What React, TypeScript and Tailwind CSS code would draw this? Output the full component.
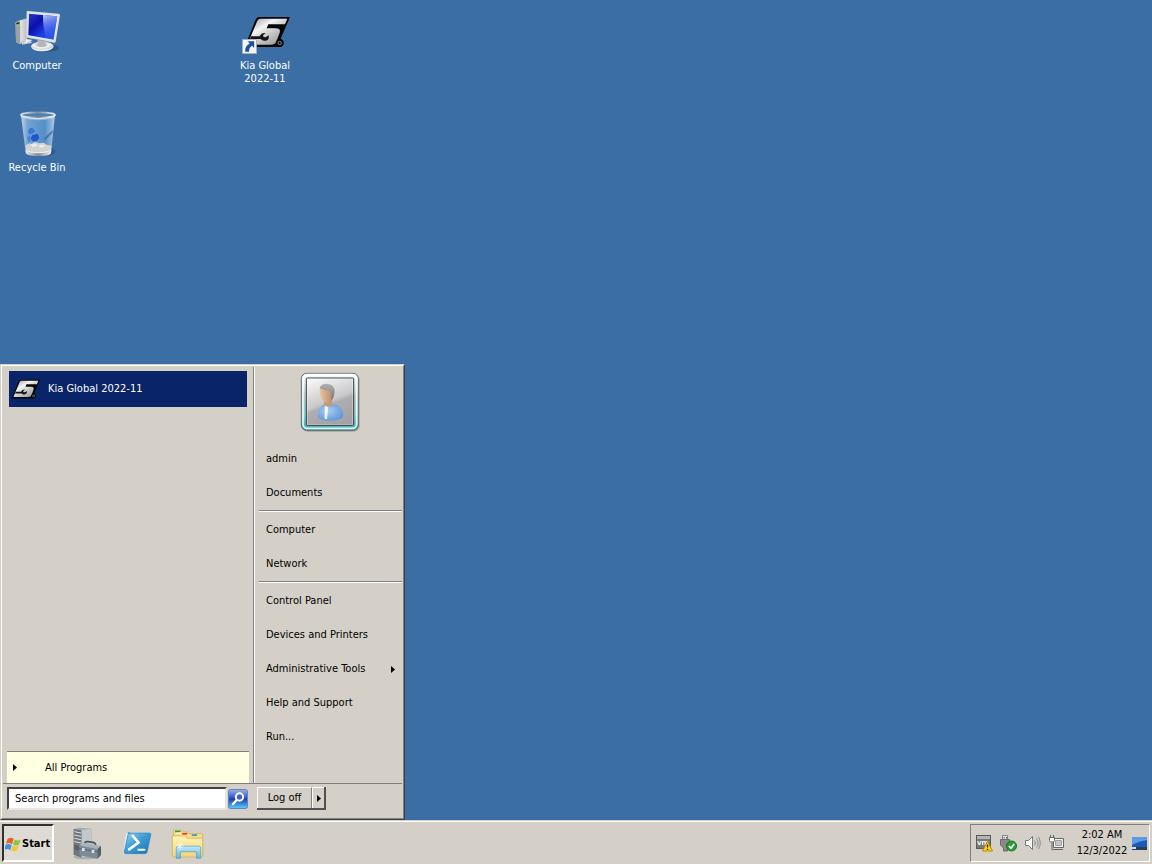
import type { ReactNode } from 'react'

const placeGroups = [
  ['admin', 'Documents'],
  ['Computer', 'Network'],
  ['Control Panel', 'Devices and Printers', 'Administrative Tools', 'Help and Support', 'Run...'],
]

function ComputerIcon() {
  return (
    <svg viewBox="39 24 144 144" className="size-12" aria-hidden="true">
      <defs>
        <linearGradient id="pcScreen" x1="0" y1="0" x2="1" y2="1">
          <stop offset="0" stopColor="#2a35c8" />
          <stop offset=".35" stopColor="#0a10a8" />
          <stop offset=".6" stopColor="#1a3be0" />
          <stop offset="1" stopColor="#2b62f2" />
        </linearGradient>
        <linearGradient id="pcGloss" x1="0" y1="0" x2=".3" y2="1">
          <stop offset="0" stopColor="#c8d8ff" stopOpacity=".95" />
          <stop offset="1" stopColor="#3e6cf4" stopOpacity=".1" />
        </linearGradient>
        <linearGradient id="pcCase" x1="0" y1="0" x2="1" y2="0">
          <stop offset="0" stopColor="#8f9499" />
          <stop offset=".4" stopColor="#e6e7e8" />
          <stop offset="1" stopColor="#b9bcc0" />
        </linearGradient>
        <radialGradient id="pcBase" cx=".45" cy=".3" r=".7">
          <stop offset="0" stopColor="#a7a9ac" />
          <stop offset=".5" stopColor="#f1f1f1" />
          <stop offset="1" stopColor="#b5b7ba" />
        </radialGradient>
      </defs>
      <ellipse cx="142" cy="144" rx="36" ry="11" fill="#1c3f6b" opacity=".45" />
      <path d="M46 67l15-6 20-6v66l-22 11-11-5z" fill="url(#pcCase)" />
      <path d="M46 67l14-4 1 68-13-4z" fill="#9da1a5" />
      <path d="M49 69l9-3v5l-9 2z" fill="#25292d" />
      <path d="M50 76l8-2v4l-8 1z" fill="#6fe02c" />
      <path d="M63 122l27 0 8 6-32 6z" fill="#c9cacc" />
      <path d="M80 117l18 3-26 12z" fill="#eee" />
      <path d="M80 34q1-2 4-1l92 8q5 1 4 5l-13 79q-1 4-5 3l-80-15q-4-1-3-5z" fill="#dcdddf" />
      <path d="M85 39l90 8-12 75-79-14z" fill="#f5f5f5" />
      <path d="M87 41l85 8-11 70-76-13z" fill="url(#pcScreen)" />
      <path d="M129 45l43 4-11 70-22-4q-11-34-10-70z" fill="url(#pcGloss)" />
      <path d="M112 118l28 5-2 15h-28z" fill="#a2a4a7" />
      <ellipse cx="127" cy="139" rx="34" ry="14" fill="url(#pcBase)" />
      <path d="M115 120l22 4q-2 11 3 14-14 6-28 0 5-7 3-18z" fill="#b4b6b9" />
      <path d="M93 141q8 14 36 13 28-1 32-15-8 10-34 10-24 0-34-8z" fill="#fff" opacity=".8" />
    </svg>
  )
}

function KiaMark({ className }: { className: string }) {
  return (
    <svg viewBox="18 14 141 96" className={className} aria-hidden="true">
      <defs>
        <linearGradient id="kiaPlate" x1="0" y1="0" x2="1" y2="1">
          <stop offset="0" stopColor="#8d8d8d" />
          <stop offset=".35" stopColor="#f4f4f4" />
          <stop offset=".6" stopColor="#c4c4c4" />
          <stop offset="1" stopColor="#8a8a8a" />
        </linearGradient>
      </defs>
      <path d="M62 17h94l-23 53-5 13q10 3 9 13-1 11-13 11H20l29-73q5-15 13-17z" fill="#050505" />
      <path d="M67 22h81l-7 17H91l-5 12h28q15 0 11 13l-9 24q-4 12-17 12H28l30-72q3-6 9-6z" fill="url(#kiaPlate)" />
      <path
        d="M39 75h26q4-11 18-10l-8 7 2 5 6 1 9-6q3 15-11 16-8 1-13-5H36z"
        fill="#151515"
      />
      <circle cx="125" cy="95" r="11" fill="#070707" />
      <circle cx="125" cy="95" r="5" fill="none" stroke="#888" strokeWidth="3" />
    </svg>
  )
}

function KiaShortcutIcon() {
  return (
    <span className="relative flex size-12 items-center pl-[3px]">
      <KiaMark className="h-8 w-[47px] shrink-0" />
      <svg viewBox="0 0 16 16" className="absolute bottom-0.5 left-px size-[15px]" aria-hidden="true">
        <path d="M.5.5h15v15H.5z" fill="#f4f6f8" stroke="#a9b0b8" />
        <path d="M6 2.500h7v7l-2.300-2.300C8.500 8.500 7.500 10 7.500 13.500H3.600C3 9.500 5 6.500 8.200 4.800z" fill="#1d4f9c" />
      </svg>
    </span>
  )
}

function RecycleBinIcon() {
  return (
    <svg viewBox="39 42 144 144" className="size-12" aria-hidden="true">
      <defs>
        <linearGradient id="binGlass" x1="0" y1="0" x2="1" y2="0">
          <stop offset="0" stopColor="#d6e6f4" stopOpacity=".85" />
          <stop offset=".2" stopColor="#7fb0dc" stopOpacity=".8" />
          <stop offset=".7" stopColor="#5e9ad2" stopOpacity=".75" />
          <stop offset="1" stopColor="#c8def2" stopOpacity=".85" />
        </linearGradient>
        <linearGradient id="binRim" x1="0" y1="0" x2="1" y2="0">
          <stop offset="0" stopColor="#e8ecef" />
          <stop offset=".5" stopColor="#7f8b95" />
          <stop offset="1" stopColor="#f2f4f6" />
        </linearGradient>
      </defs>
      <ellipse cx="132" cy="166" rx="34" ry="15" fill="#1f4778" opacity=".45" />
      <path d="M63 58l14 112q2 9 38 9t38-9l12-112z" fill="url(#binGlass)" />
      <ellipse cx="114" cy="57" rx="51" ry="8" fill="#4c80b6" />
      <path d="M63 58q50 18 102 0l-1 8q-50 14-100 0z" fill="#a8cbea" opacity=".6" />
      <path d="M132 127l26-25v8l-24 24z" fill="#3b6e9e" opacity=".75" />
      <path d="M86 101q5-8 12-5l7 8-5 8-11 3q-7-6-3-14z" fill="#3a78d6" />
      <path d="M97 117l16-4 5 12-7 11H97l-5-9z" fill="#1f58cb" />
      <path d="M81 124l9-7 3 16-8 5z" fill="#4585da" />
      <path d="M76 149q8-9 19-6l10-5 14 4 12-2 9 6 15 3-2 16q-8 8-38 8-32 0-36-9z" fill="#d3d2d0" />
      <path d="M90 147l14-5 9 7-14 4zM121 146l15 2-8 7-12-2z" fill="#ececea" />
      <path d="M76 163q10 9 39 9 30 0 39-9l-2 10q-6 7-37 7-32 0-37-8z" fill="url(#binRim)" />
      <path d="M78 162q12 8 37 8 27 0 37-8" fill="none" stroke="#fff" strokeWidth="2" />
      <ellipse cx="114" cy="57" rx="51" ry="8" fill="none" stroke="url(#binRim)" strokeWidth="5" />
      <path d="M64 60q50 16 101 0" fill="none" stroke="#e9eef2" strokeWidth="3" />
    </svg>
  )
}

function UserPicture() {
  return (
    <svg viewBox="165 36 180 180" className="size-[60px]" aria-hidden="true">
      <defs>
        <linearGradient id="frame" x1="0" y1="0" x2="0" y2="1">
          <stop offset="0" stopColor="#fff" />
          <stop offset=".4" stopColor="#b9c6c6" />
          <stop offset=".75" stopColor="#7ccdd0" />
          <stop offset="1" stopColor="#3fa6ac" />
        </linearGradient>
        <linearGradient id="photo" x1=".3" y1="0" x2=".7" y2="1">
          <stop offset="0" stopColor="#f4f4f4" />
          <stop offset=".48" stopColor="#c9c9cb" />
          <stop offset=".56" stopColor="#aeadb1" />
          <stop offset="1" stopColor="#a3a1a7" />
        </linearGradient>
        <radialGradient id="shirt" cx=".4" cy=".4" r=".7">
          <stop offset="0" stopColor="#a9cdf3" />
          <stop offset="1" stopColor="#5b93d6" />
        </radialGradient>
        <linearGradient id="skin" x1="0" y1="0" x2="1" y2="0">
          <stop offset="0" stopColor="#e9c49c" />
          <stop offset="1" stopColor="#b5896a" />
        </linearGradient>
        <linearGradient id="hair" x1="0" y1="0" x2="0" y2="1">
          <stop offset="0" stopColor="#b0b0b1" />
          <stop offset="1" stopColor="#7d7775" />
        </linearGradient>
      </defs>
      <rect x="171" y="43" width="173" height="172" rx="18" fill="#000" opacity=".22" />
      <rect x="169" y="40" width="171" height="171" rx="16" fill="url(#frame)" stroke="#596e70" strokeWidth="3" />
      <rect x="174" y="44" width="161" height="161" rx="13" fill="none" stroke="#fff" strokeWidth="5" opacity=".85" />
      <rect x="184" y="54" width="142" height="142" rx="3" fill="url(#photo)" stroke="#3b3f42" strokeWidth="3" />
      <rect x="187" y="57" width="136" height="136" fill="none" stroke="#fff" strokeWidth="2" opacity=".5" />
      <path d="M218 170q0-28 20-37l32 0q24 8 25 36-8 13-38 13-31 0-39-12z" fill="url(#shirt)" />
      <path d="M239 140l5-7 6 5-4 40-7-2z" fill="#f3f6fa" />
      <path d="M236 118l25 2 1 17-14 4-10-5z" fill="#c49a78" />
      <path d="M224 92q0-17 18-17 22 0 24 21 0 30-19 34-20-5-23-38z" fill="url(#skin)" />
      <path d="M224 85q2-14 21-14 25 1 24 25-1 15-7 23l-4-2q3-14-2-24-14 0-32-8z" fill="url(#hair)" />
    </svg>
  )
}

function WindowsFlag() {
  return (
    <svg viewBox="14 286 48 44" className="h-[15px] w-4" aria-hidden="true">
      <path d="M22 291q10-6 18 0l-5 16q-9-6-18-1z" fill="#e8602a" />
      <path d="M43 293q8 6 18 1l-5 15q-10 4-18-1z" fill="#8cc63e" />
      <path d="M16 309q9-5 18 1l-4 15q-9-6-18-1z" fill="#3f93dc" />
      <path d="M37 311q8 6 18 1l-5 14q-9 5-17-1z" fill="#f8c62c" />
    </svg>
  )
}

function ServerManagerIcon() {
  return (
    <svg viewBox="219 258 96 99" className="h-[33px] w-8" aria-hidden="true">
      <ellipse cx="258" cy="348" rx="34" ry="7" fill="#777" opacity=".4" />
      <path d="M224 264l18-4 36 3v80l-30 8-24-10z" fill="#a4abb1" />
      <path d="M224 264l24 4v82l-24-9z" fill="#6f777e" />
      <path d="M248 268l30-5v78l-30 9z" fill="#c3c8cc" />
      <path d="M226 272l20 4M226 282l20 4M226 292l20 4M226 302l20 4" stroke="#dde2e5" strokeWidth="3" />
      <path d="M226 312l20 4v14l-20-4z" fill="#59626a" />
      <path d="M256 310q1-9 10-8l16 2q8 1 8 10" fill="none" stroke="#4a535b" strokeWidth="5" />
      <path d="M240 313l14-8 51 9-10 10z" fill="#aab3bb" />
      <path d="M240 313l55 11v30l-53-11z" fill="#7e8b96" />
      <path d="M295 324l11-10v28l-11 12z" fill="#56616b" />
      <path d="M240 322l55 11 11-9" fill="none" stroke="#46515b" strokeWidth="2" />
      <path d="M249 321h8v9h-8zM278 327h8v9h-8z" fill="#dde5ea" />
    </svg>
  )
}

function PowerShellIcon() {
  return (
    <svg viewBox="366 272 93 76" className="h-[25px] w-[31px]" aria-hidden="true">
      <defs>
        <linearGradient id="shell" x1="0" y1="0" x2="1" y2="1">
          <stop offset="0" stopColor="#9fd4f0" />
          <stop offset=".45" stopColor="#3e9dd5" />
          <stop offset="1" stopColor="#1971b5" />
        </linearGradient>
      </defs>
      <path d="M377 281q2-5 7-5l64 0q7 0 6 6l-11 55q-1 6-8 6h-60q-7 0-6-6z" fill="#d8ecf7" />
      <path d="M383 278h66q5 0 4 5l-11 52q-1 6-7 6h-58q-6 0-5-5l12-54q1-4 5-4z" fill="url(#shell)" stroke="#2c78ae" strokeWidth="2" />
      <path d="M398 287l18 20-29 21" fill="none" stroke="#fff" strokeWidth="8" strokeLinejoin="round" strokeLinecap="round" />
      <path d="M415 329h19" stroke="#fff" strokeWidth="6" strokeLinecap="round" />
    </svg>
  )
}

function ExplorerIcon() {
  return (
    <svg viewBox="511 266 100 92" className="h-[31px] w-[33px]" aria-hidden="true">
      <defs>
        <linearGradient id="folder" x1="0" y1="0" x2="0" y2="1">
          <stop offset="0" stopColor="#fdf3b4" />
          <stop offset="1" stopColor="#f0d67a" />
        </linearGradient>
        <linearGradient id="stand" x1="0" y1="0" x2="0" y2="1">
          <stop offset="0" stopColor="#c5e9fa" />
          <stop offset="1" stopColor="#5fb2df" />
        </linearGradient>
      </defs>
      <path d="M518 275q0-4 4-4h20l4 6h16l3 5h37q5 0 5 5v61h-89z" fill="#f3df8a" stroke="#c9aa52" strokeWidth="2" />
      <path d="M523 273h17v5h-17z" fill="#3a9a3a" />
      <path d="M527 279h14v3h-14z" fill="#fff" />
      <path d="M545 280h15v5h-15z" fill="#d8412c" />
      <path d="M574 284h16v5h-16z" fill="#3f8fd2" />
      <path d="M515 289h40l5 7h47v54q0 3-4 3h-84q-4 0-4-4z" fill="url(#folder)" stroke="#c9aa52" strokeWidth="2" />
      <path d="M527 357v-31q0-6 6-6h62q6 0 6 6v31h-13v-20h-48v20z" fill="url(#stand)" stroke="#4b9cca" strokeWidth="2" />
      <path d="M538 308v22M527 319h22M531 312l14 14M545 312l-14 14" stroke="#fff" strokeWidth="2" />
    </svg>
  )
}

function SearchIcon() {
  return (
    <svg viewBox="0 0 20 20" className="size-5" aria-hidden="true">
      <defs>
        <linearGradient id="go" x1="0" y1="0" x2="0" y2="1">
          <stop offset="0" stopColor="#9cb4ec" />
          <stop offset=".45" stopColor="#2c50c8" />
          <stop offset=".5" stopColor="#1b3cb4" />
          <stop offset="1" stopColor="#5ad4f8" />
        </linearGradient>
      </defs>
      <rect x=".5" y=".5" width="19" height="19" rx="2" fill="url(#go)" stroke="#5f86c4" />
      <path d="M8.700 11L5 15" stroke="#fff" strokeWidth="2.500" strokeLinecap="round" />
      <circle cx="11.500" cy="8" r="3.700" fill="#3f64d0" stroke="#fff" strokeWidth="2" />
    </svg>
  )
}

function VmIcon() {
  return (
    <svg viewBox="0 0 17 18" className="h-[18px] w-[17px]" aria-hidden="true">
      <rect x=".5" y="1.500" width="14" height="13" fill="#787878" stroke="#5a5a5a" />
      <path d="M1 2h13v3H1z" fill="#b5b5b5" />
      <text x="1" y="11" fontSize="8" fontWeight="700" fill="#fff" fontFamily="Liberation Sans, sans-serif">vm</text>
      <path d="M11.500 7.500l5 9.500h-10z" fill="#ffd21e" stroke="#c08a00" strokeLinejoin="round" />
      <path d="M11.500 10.500v3M11.500 14.700v1.200" stroke="#222" strokeWidth="1.300" />
    </svg>
  )
}

function SafelyRemoveIcon() {
  return (
    <svg viewBox="0 0 17 18" className="h-[18px] w-[17px]" aria-hidden="true">
      <path d="M2.500 1.500h5v4h-5z" fill="#e6e6e6" stroke="#858585" />
      <path d="M.5 5.500h9v6l-2 2.500v3h-4v-3l-3-3z" fill="#8a8a8a" stroke="#6c6c6c" />
      <path d="M4 3v1.500M6.500 3v1.500" stroke="#555" />
      <circle cx="11.500" cy="12" r="5" fill="#27a035" stroke="#157321" />
      <path d="M9 12l2 2.200 3.200-4.200" fill="none" stroke="#fff" strokeWidth="1.700" />
    </svg>
  )
}

function VolumeIcon() {
  return (
    <svg viewBox="0 0 17 18" className="h-[18px] w-[17px]" aria-hidden="true">
      <path d="M1.500 6.500h3l4-4v13l-4-4h-3z" fill="#f8f8f8" stroke="#777" strokeLinejoin="round" />
      <path d="M10.500 6.500q2 2.500 0 5M12.500 4.500q3.200 4.500 0 9M14.500 2.800q3.500 6.200 0 12.400" fill="none" stroke="#8a8a8a" />
    </svg>
  )
}

function NetworkIcon() {
  return (
    <svg viewBox="0 0 17 18" className="h-[18px] w-[17px]" aria-hidden="true">
      <path d="M5.500 4.500h10v9h-10z" fill="#f4f4f4" stroke="#666" />
      <path d="M7.500 6.500h6v5h-6z" fill="#c6c6c6" stroke="#a0a0a0" />
      <path d="M5 15.500h10" stroke="#666" />
      <path d="M1.500 3.500h5v3l-1 1.500h-3l-1-1.500z" fill="#fff" stroke="#666" />
      <path d="M2.500 1v2.500M5.500 1v2.500M4 8.500v8" fill="none" stroke="#666" />
    </svg>
  )
}

function ShowDesktopIcon() {
  return (
    <svg viewBox="0 0 15 13" className="h-[13px] w-[15px]" aria-hidden="true">
      <path d="M0 0h15v10H0z" fill="#1d59b3" />
      <path d="M0 0h15v3Q7 4 0 8z" fill="#5c9be6" />
      <path d="M0 10h15v3H0z" fill="#2b3c55" />
      <path d="M0 10h4v2H0z" fill="#d5dde8" />
    </svg>
  )
}

function Arrow() {
  return (
    <svg viewBox="0 0 4 7" className="h-[7px] w-1 shrink-0" aria-hidden="true">
      <path d="M0 0l4 3.500L0 7z" fill="#000" />
    </svg>
  )
}

function DesktopItem({ label, className, children }: { label: string; className?: string; children: ReactNode }) {
  return (
    <button className={`flex flex-col items-center pt-2 leading-[13px] text-white ${className ?? ''}`}>
      {children}
      <span className="mt-[3px] w-16">{label}</span>
    </button>
  )
}

function StartMenu() {
  return (
    <nav
      aria-label="Start menu"
      className="absolute bottom-0 left-0 w-[405px] border border-t-[#d4d0c8] border-r-[#404040] border-b-[#404040] border-l-[#d4d0c8] bg-[#d4d0c8]"
    >
      <div className="border border-t-white border-r-[#808080] border-b-[#808080] border-l-white px-px pt-px">
        <div className="flex">
          <div className="flex w-[250px] flex-col pt-1 pr-1 pl-1">
            <button className="mx-0.5 flex h-9 items-center gap-[7px] bg-[#0a246a] pl-0.5 text-left text-white">
              <KiaMark className="h-5 w-[30px]" />
              Kia Global 2022-11
            </button>
            <button className="mt-auto flex h-8 items-center gap-7 border-t border-[#808080] bg-[#ffffe1] pl-1.5">
              <Arrow />
              All Programs
            </button>
          </div>
          <div className="flex-1 border-l border-[#808080]">
            <div className="flex flex-col border-l border-white pt-[5px] pb-[29px] pl-1">
              <div className="flex h-[70px] justify-center pr-0.5">
                <UserPicture />
              </div>
              {placeGroups.map((group, i) => (
                <ul key={i} className={i > 0 ? 'border-t border-[#808080]' : ''}>
                  {group.map((name, j) => (
                    <li key={name} className={i > 0 && j === 0 ? 'border-t border-white pt-px' : ''}>
                      <button className="flex h-[34px] w-full items-center justify-between pr-[7px] pl-[7px]">
                        {name}
                        {name === 'Administrative Tools' && <Arrow />}
                      </button>
                    </li>
                  ))}
                </ul>
              ))}
            </div>
          </div>
        </div>
        <div className="flex items-start border-t border-[#808080] pt-[3px] pb-2 pl-1">
          <form className="flex items-center gap-px" onSubmit={e => e.preventDefault()}>
            <input
              type="text"
              aria-label="Search programs and files"
              placeholder="Search programs and files"
              className="h-[23px] w-[220px] border-2 border-t-[#404040] border-r-[#e8e6e0] border-b-[#e8e6e0] border-l-[#404040] bg-white px-1.5 outline-none placeholder:text-black placeholder:opacity-100"
            />
            <button aria-label="Search">
              <SearchIcon />
            </button>
          </form>
          <div className="ml-[9px] flex h-[23px] border-r-2 border-b-2 border-[#505050]">
            <button className="w-[55px] border-t border-r border-l border-t-white border-r-[#808080] border-l-white">
              Log off
            </button>
            <button
              aria-label="More shut down options"
              className="flex w-3 items-center justify-center border-t border-l border-white"
            >
              <Arrow />
            </button>
          </div>
        </div>
      </div>
    </nav>
  )
}

function Taskbar() {
  return (
    <footer className="border-t border-[#d4d0c8] bg-[#d4d0c8]">
      <div className="flex items-center border-t border-white px-0.5 py-0.5">
        <button className="flex h-[38px] w-[52px] items-center gap-px border-2 border-t-[#303030] border-r-white border-b-white border-l-[#303030] bg-[#dedbd4] pt-0.5 pl-px font-bold">
          <WindowsFlag />
          Start
        </button>
        <div className="ml-[18px] flex items-center gap-[18px]">
          <button aria-label="Server Manager">
            <ServerManagerIcon />
          </button>
          <button aria-label="Windows PowerShell">
            <PowerShellIcon />
          </button>
          <button aria-label="Windows Explorer">
            <ExplorerIcon />
          </button>
        </div>
        <div className="ml-auto flex h-[38px] items-center border border-t-[#808080] border-r-white border-b-white border-l-[#808080] pr-0.5 pl-[5px]">
          <div className="flex gap-[7px]">
            <VmIcon />
            <SafelyRemoveIcon />
            <VolumeIcon />
            <NetworkIcon />
          </div>
          <time className="ml-2.5 w-[54px] text-center leading-4 whitespace-nowrap">
            2:02 AM
            <br />
            12/3/2022
          </time>
          <button aria-label="Show desktop" className="ml-[3px]">
            <ShowDesktopIcon />
          </button>
        </div>
      </div>
    </footer>
  )
}

export default function App() {
  return (
    <div className="flex min-h-screen flex-col bg-[#3a6ea5] font-['DejaVu_Sans_Condensed','Noto_Sans',sans-serif] text-[11px] leading-[14px] text-black">
      <main className="relative flex-1">
        <div className="grid auto-rows-[102px] grid-cols-[repeat(auto-fill,74px)] gap-x-0.5">
          <DesktopItem label="Computer">
            <ComputerIcon />
          </DesktopItem>
          <DesktopItem label="Kia Global 2022-11" className="col-start-4">
            <KiaShortcutIcon />
          </DesktopItem>
          <DesktopItem label="Recycle Bin" className="col-start-1">
            <RecycleBinIcon />
          </DesktopItem>
        </div>
        <StartMenu />
      </main>
      <Taskbar />
    </div>
  )
}
